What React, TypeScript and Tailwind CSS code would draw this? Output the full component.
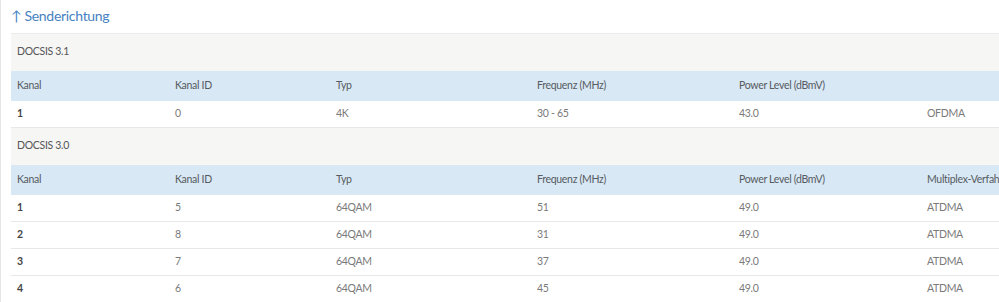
import React from 'react';

const cols = [158, 161, 201, 202, 188, 160];

const headers = ['Kanal', 'Kanal ID', 'Typ', 'Frequenz (MHz)', 'Power Level (dBmV)'];

interface Group {
  title: string;
  lastHeader: string;
  rows: string[][];
}

const groups: Group[] = [
  {
    title: 'DOCSIS 3.1',
    lastHeader: '',
    rows: [['1', '0', '4K', '30 - 65', '43.0', 'OFDMA']],
  },
  {
    title: 'DOCSIS 3.0',
    lastHeader: 'Multiplex-Verfahren',
    rows: [
      ['1', '5', '64QAM', '51', '49.0', 'ATDMA'],
      ['2', '8', '64QAM', '31', '49.0', 'ATDMA'],
      ['3', '7', '64QAM', '37', '49.0', 'ATDMA'],
      ['4', '6', '64QAM', '45', '49.0', 'ATDMA'],
    ],
  },
];

export default function App() {
  return (
    <div
      className="w-[999px] h-[302px] overflow-hidden bg-white border-l border-[#e6e6e6] pl-[10px]"
      style={{ fontFamily: 'Lato, "Open Sans", sans-serif' }}
    >
      <h2 className="h-[33px] pt-[6px] text-[14px] leading-[20px] tracking-[-0.3px] text-[#4682c2]">
        ↑ Senderichtung
      </h2>
      <table className="table-fixed border-collapse w-[1070px] text-[10.5px] tracking-[-0.3px] text-[#666]">
        <colgroup>
          {cols.map((w, i) => (
            <col key={i} style={{ width: w }} />
          ))}
        </colgroup>
        <tbody>
          {groups.map((g) => (
            <React.Fragment key={g.title}>
              <tr className="h-[37px] bg-[#f6f6f5] border-t border-[#ebebeb]">
                <td colSpan={6} className="px-[6px] text-[#555]">
                  {g.title}
                </td>
              </tr>
              <tr className="h-[30px] bg-[#d9e8f5]">
                {[...headers, g.lastHeader].map((h, i) => (
                  <td key={i} className="px-[6px] text-[#555b60] whitespace-nowrap">
                    {h}
                  </td>
                ))}
              </tr>
              {g.rows.map((r, ri) => (
                <tr key={ri} className="h-[27px] border-b border-[#e8e8e8]">
                  {r.map((c, i) => (
                    <td
                      key={i}
                      className={`px-[6px] ${i === 0 ? 'font-bold text-[#444]' : 'text-[#7a7a7a]'}`}
                    >
                      {c}
                    </td>
                  ))}
                </tr>
              ))}
            </React.Fragment>
          ))}
        </tbody>
      </table>
    </div>
  );
}
